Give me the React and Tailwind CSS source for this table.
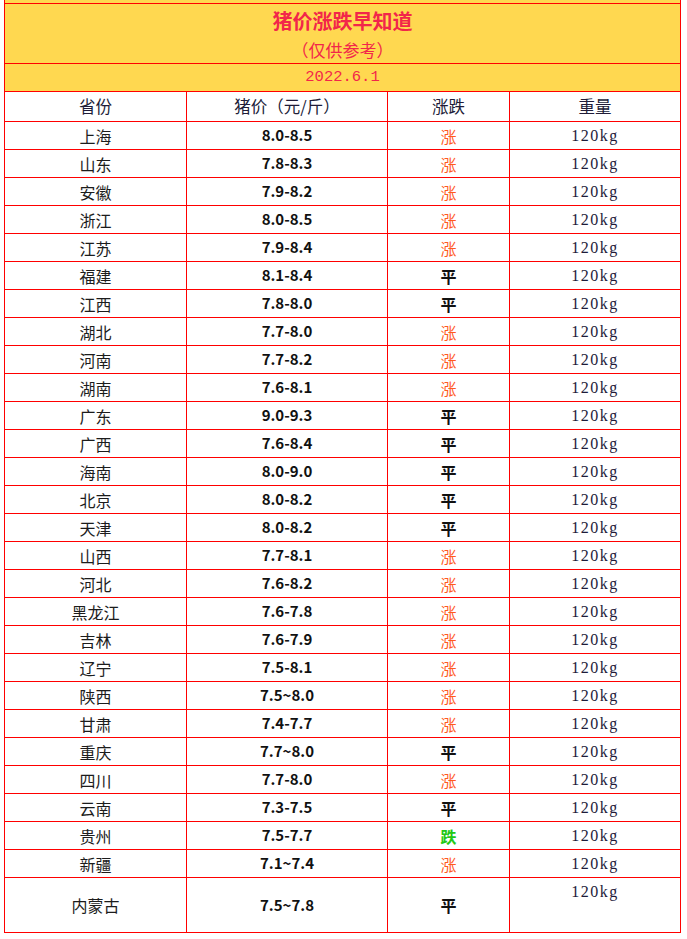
const rows = [
  ["上海", "8.0-8.5", "涨"],
  ["山东", "7.8-8.3", "涨"],
  ["安徽", "7.9-8.2", "涨"],
  ["浙江", "8.0-8.5", "涨"],
  ["江苏", "7.9-8.4", "涨"],
  ["福建", "8.1-8.4", "平"],
  ["江西", "7.8-8.0", "平"],
  ["湖北", "7.7-8.0", "涨"],
  ["河南", "7.7-8.2", "涨"],
  ["湖南", "7.6-8.1", "涨"],
  ["广东", "9.0-9.3", "平"],
  ["广西", "7.6-8.4", "平"],
  ["海南", "8.0-9.0", "平"],
  ["北京", "8.0-8.2", "平"],
  ["天津", "8.0-8.2", "平"],
  ["山西", "7.7-8.1", "涨"],
  ["河北", "7.6-8.2", "涨"],
  ["黑龙江", "7.6-7.8", "涨"],
  ["吉林", "7.6-7.9", "涨"],
  ["辽宁", "7.5-8.1", "涨"],
  ["陕西", "7.5~8.0", "涨"],
  ["甘肃", "7.4-7.7", "涨"],
  ["重庆", "7.7~8.0", "平"],
  ["四川", "7.7-8.0", "涨"],
  ["云南", "7.3-7.5", "平"],
  ["贵州", "7.5-7.7", "跌"],
  ["新疆", "7.1~7.4", "涨"],
];

const trendColor = {
  涨: "text-[#ff5a1e] font-normal",
  平: "text-[#111] font-bold",
  跌: "text-[#22c814] font-bold",
};

const sans = "font-['Noto_Sans_CJK_SC','Noto_Sans',sans-serif]";
const mono = "font-['Liberation_Mono','Noto_Sans_CJK_SC',monospace]";
const serif = "font-['Liberation_Serif','Noto_Sans_CJK_SC',serif]";

function Row({ name, price, trend, tall }) {
  const h = tall ? "h-[54px]" : "h-[27px]";
  return (
    <>
      <div className={`${h} bg-white flex items-center justify-center text-[16px] text-[#1c1c1c]`}>
        {name}
      </div>
      <div className={`${h} bg-white flex items-center justify-center text-[15px] font-bold text-[#111]`}>
        {price}
      </div>
      <div className={`${h} bg-white flex items-center justify-center text-[16px] ${trendColor[trend]}`}>
        {trend}
      </div>
      <div className={`${h} bg-white flex justify-center ${serif} text-[16px] tracking-[1.5px] text-[#1e1b3a] leading-[28px]`}>
        120kg
      </div>
    </>
  );
}

export default function App() {
  return (
    <div className={`w-[687px] h-[939px] bg-white ${sans}`}>
      <div className="ml-[4px] w-[677px]">
        {/* cut-off cell above */}
        <div className="h-[3px] bg-[#ffd850] border-x border-[#ff0000]" />

        <div className="bg-[#ff0000] p-px grid grid-cols-[181px_200px_121px_170px] gap-px">
          {/* Title */}
          <div className="col-span-4 h-[59px] bg-[#ffd850] flex flex-col items-center pt-[5px]">
            <div className="text-[20px] leading-[24px] font-bold text-[#f2264a]">
              猪价涨跌早知道
            </div>
            <div className="mt-[6px] text-[17px] leading-[21px] text-[#f2264a]">
              （仅供参考）
            </div>
          </div>

          {/* Date */}
          <div className={`col-span-4 h-[27px] bg-[#ffd850] flex items-center justify-center ${mono} text-[15.5px] text-[#f2264a]`}>
            2022.6.1
          </div>

          {/* Header */}
          {["省份", "猪价（元/斤）", "涨跌", "重量"].map((t) => (
            <div
              key={t}
              className="h-[29px] bg-white flex items-center justify-center text-[16.5px] text-[#201c38]"
            >
              {t}
            </div>
          ))}

          {rows.map(([name, price, trend]) => (
            <Row key={name} name={name} price={price} trend={trend} />
          ))}
          <Row name="内蒙古" price="7.5~7.8" trend="平" tall />
        </div>
      </div>
    </div>
  );
}
